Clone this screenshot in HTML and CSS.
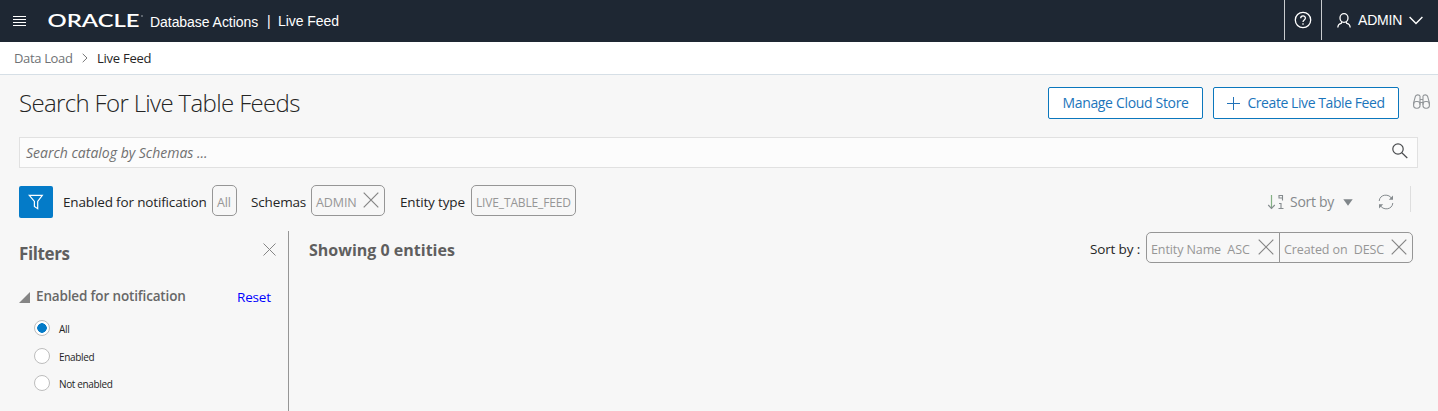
FILE: index.html
```html
<!DOCTYPE html>
<html lang="en">
<head>
<meta charset="utf-8">
<title>Database Actions | Live Feed</title>
<link rel="stylesheet" href="styles.css">
</head>
<body>
<header class="topbar">
  <svg class="menu" width="13" height="11" viewBox="0 0 13 11"><path d="M0 .5h13M0 3.500h13M0 6.500h13M0 9.500h13" stroke="#fff"/></svg>
  <svg class="logo" width="96" height="20" viewBox="0 0 96 20"><text x="-.5" y="16" textLength="92" lengthAdjust="spacingAndGlyphs">ORACLE</text><circle cx="94" cy="5" r=".8" fill="#aeb3b8"/></svg>
  <span class="product">Database Actions</span>
  <span class="bar">|</span>
  <span class="section">Live Feed</span>
  <div class="tools">
    <button class="help" aria-label="Help"><svg width="18" height="18" viewBox="0 0 18 18" fill="none" stroke="#fff" stroke-width="1.3"><circle cx="9" cy="9" r="7.700"/><path d="M6.700 7.200c0-3.100 4.700-3 4.700-.2 0 2-2.400 1.800-2.400 4M9 12.200v1.600"/></svg></button>
    <button class="user"><svg width="14" height="15" viewBox="0 0 14 15" fill="none" stroke="#fff" stroke-width="1.3"><ellipse cx="7" cy="5" rx="4" ry="4.300"/><path d="M5 8.800 4.200 10.400C2 10.800 1 11.800.8 14.500M9 8.800l.8 1.600c2.200.4 3.200 1.400 3.400 4.100"/></svg><span>ADMIN</span><svg width="14" height="9" viewBox="0 0 14 9" fill="none" stroke="#fff" stroke-width="1.4"><path d="M.6 1 7 7.400 13.400 1"/></svg></button>
  </div>
</header>
<nav class="crumbs">
  <a class="crumb-link">Data Load</a>
  <svg width="6" height="10" viewBox="0 0 6 10" fill="none" stroke="#777"><path d="M.7.8 5 5 .7 9.200"/></svg>
  <span class="crumb-now">Live Feed</span>
</nav>
<main>
  <div class="title-row">
    <h1>Search For Live Table Feeds</h1>
    <button class="btn manage"><span>Manage Cloud Store</span></button>
    <button class="btn create"><svg width="13" height="13" viewBox="0 0 13 13"><path d="M6.500 0v13M0 6.500h13" stroke="#2272b8"/></svg><span>Create Live Table Feed</span></button>
    <svg class="binoculars" width="17" height="15" viewBox="0 0 17 15" fill="none" stroke="#929699" stroke-width="1.1"><path d="M.7 10.500V8.500L2.300 2.700C2.600.3 6.400.3 7 2.200v8.500M16.300 10.500V8.500l-1.600-5.800C14.400.3 10.600.3 10 2.200v8.500M7 5.500h3M7 8.500h3"/><rect x=".6" y="7.500" width="6.400" height="6.700" rx="2.600"/><rect x="10" y="7.500" width="6.400" height="6.700" rx="2.600"/></svg>
  </div>
  <div class="search"><span>Search catalog by Schemas ...</span><svg width="16" height="16" viewBox="0 0 16 16" fill="none" stroke="#494b4e" stroke-width="1.2"><circle cx="6" cy="6" r="5.200"/><path d="m9.800 9.800 5.500 5.200"/></svg></div>
  <div class="filter-row">
    <button class="funnel" aria-label="Filters"><svg width="16" height="16" viewBox="0 0 16 16" fill="none" stroke="#fff" stroke-width="1.2"><path d="M1.300 1.300h13L9.700 7.400v7.300L6.400 12.500V7.400z"/></svg></button>
    <span class="label l-notify">Enabled for notification</span><span class="chip c-all"><span>All</span></span>
    <span class="label l-schemas">Schemas</span><span class="chip c-admin"><span>ADMIN</span><svg class="x" width="16" height="16" viewBox="0 0 16 16"><path d="m.7.7 14.600 14.600M15.300.7.7 15.300"/></svg></span>
    <span class="label l-type">Entity type</span><span class="chip c-type"><span>LIVE_TABLE_FEED</span></span>
    <div class="actions">
      <svg width="17" height="16" viewBox="0 0 17 16" fill="none" stroke="#858b8e"><path d="M4.500 1v13.500" stroke="#83b083" stroke-width="1.2"/><path d="M1.200 11 4.500 14.400 7.800 11M15.500 6.500V1.500h-3.500v2.500h3.500M12 9.500h2v5M11.500 14.500h5" stroke-width="1.1"/></svg>
      <span class="sort">Sort by</span>
      <svg class="caret" width="10" height="7" viewBox="0 0 10 7"><path d="M.3.3h9.400L5 6.800z" fill="#80868a"/></svg>
      <svg class="refresh" width="16" height="16" viewBox="0 0 16 16" fill="none" stroke="#858b8e"><path d="M1.200 7C1.600 0 11.400-.8 14 5M14.800 9C14.400 16 4.600 16.800 2 11"/><path d="M15 1.500v4.300h-4.200zM1 14.500v-4.300h4.200z" fill="#858b8e" stroke="none"/></svg>
    </div>
  </div>
  <div class="body-row">
    <aside>
      <div class="panel-head"><h2>Filters</h2><svg class="x" width="13" height="13" viewBox="0 0 13 13"><path d="m.5.5 12 12M12.500.5l-12 12"/></svg></div>
      <div class="group"><svg width="11" height="11" viewBox="0 0 11 11"><path d="M11 0v11H0z" fill="#858585"/></svg><h3>Enabled for notification</h3><a>Reset</a></div>
      <label class="radio"><input type="radio" name="n" checked><span>All</span></label>
      <label class="radio"><input type="radio" name="n"><span>Enabled</span></label>
      <label class="radio"><input type="radio" name="n"><span>Not enabled</span></label>
    </aside>
    <section class="results">
      <h2 class="count">Showing 0 entities</h2>
      <span class="label l-sort">Sort by :</span>
      <div class="sorts">
        <span class="chip s-name"><span>Entity Name&nbsp; ASC</span><svg class="x" width="16" height="16" viewBox="0 0 16 16"><path d="m.7.7 14.600 14.600M15.300.7.7 15.300"/></svg></span>
        <span class="chip s-date"><span>Created on&nbsp; DESC</span><svg class="x" width="16" height="16" viewBox="0 0 16 16"><path d="m.7.7 14.600 14.600M15.300.7.7 15.300"/></svg></span>
      </div>
    </section>
  </div>
</main>
</body>
</html>
```
FILE: styles.css
```css
* { box-sizing: border-box; }
body { margin: 0; height: 411px; overflow: hidden; background: #f7f7f7; color: #252525; font: 14px/20px "Open Sans", "Noto Sans", sans-serif; letter-spacing: -.4px; white-space: nowrap; }
h1, h2, h3 { margin: 0; }
svg { display: block; flex: none; }
button { font: inherit; letter-spacing: inherit; padding: 0; border: 0; background: none; color: inherit; display: flex; align-items: center; }
.topbar { height: 42px; background: #1e2733; color: #fff; display: flex; align-items: flex-start; padding-left: 13px; font: 14px/20px "Liberation Sans", Arial, sans-serif; letter-spacing: 0; }
.menu { margin-top: 16px; }
.logo { margin: 11px 6px 0 22px; }
.logo text { font: 600 17px "Lato", sans-serif; fill: #fff; }
.product { width: 117px; margin-top: 12px; letter-spacing: -.05px; }
.bar { width: 11px; margin-top: 11px; }
.section { margin-top: 11px; letter-spacing: -.05px; }
.tools { margin-left: auto; display: flex; height: 40px; width: 154px; }
.help { width: 38px; justify-content: center; border: solid #c8cbce; border-width: 0 1px; }
.user { padding-left: 15px; }
.user span { width: 45px; margin: 0 6px 0 7px; letter-spacing: -.2px; text-align: left; }
.crumbs { height: 33px; background: #fff; border-bottom: 1px solid #d6dfe6; display: flex; align-items: center; padding-left: 14px; font-size: 13px; letter-spacing: -.35px; }
.crumb-link { width: 68px; color: #6f7275; }
.crumbs svg { margin-right: 9px; }
.crumb-now { letter-spacing: -.25px; }
.title-row { height: 62px; display: flex; padding-left: 19px; }
h1 { font-size: 24px; line-height: 34px; font-weight: 300; letter-spacing: -.65px; margin-top: 11px; width: 1029px; }
.btn { height: 32px; margin-top: 12px; background: #fff; border: 1px solid #0b77bd; border-radius: 2px; color: #1b75bb; justify-content: center; }
.manage { width: 155px; margin-right: 10px; letter-spacing: -.33px; }
.create { width: 186px; gap: 7px; letter-spacing: -.43px; }
.binoculars { margin: 19px 0 0 14px; }
.search { height: 31px; margin: 0 20px 0 19px; background: #fcfcfc; border: 1px solid #e1e1e1; display: flex; align-items: center; justify-content: space-between; padding: 0 9px 0 6px; color: #707070; font-size: 14px; letter-spacing: 0; font-style: italic; }
.search svg { margin-top: -3px; }
.filter-row { height: 63px; display: flex; align-items: flex-start; padding: 17px 27px 0 19px; }
.funnel { width: 34px; height: 32px; margin-top: 1px; margin-right: 10px; justify-content: center; background: #047bc8; border-radius: 2px; }
.label { font-size: 13.500px; margin-top: 7px; letter-spacing: -.15px; }
.l-notify { width: 149px; }
.l-schemas { width: 60px; margin-left: 14px; }
.l-type { width: 71px; margin-left: 15px; }
.chip { height: 31px; border: 1px solid #969696; border-radius: 5px; display: flex; padding: 0 4px; color: #969696; font-size: 12.500px; letter-spacing: -.1px; line-height: 33px; }
.x { fill: none; stroke: #858585; stroke-width: 1.200; }
.chip .x { margin: 6px 1px 0 auto; }
.c-all { width: 25px; }
.c-admin { width: 74px; }
.c-type { width: 105px; font-size: 12px; letter-spacing: -.15px; }
.actions { margin-left: auto; width: 144px; height: 26px; margin-top: 1px; border-right: 1px solid #dedede; display: flex; align-items: flex-start; color: #85898c; }
.actions > svg { margin-top: 8px; }
.sort { margin: 6px 8px 0 6px; width: 45px; letter-spacing: -.3px; }
.actions .caret { margin-top: 13px; }
.actions .refresh { margin-left: 25px; }
.body-row { display: flex; height: 180px; }
aside { width: 289px; border-right: 1px solid #969696; padding-left: 19px; }
.panel-head { display: flex; height: 55px; justify-content: space-between; padding-right: 12px; }
h2 { font-size: 17px; line-height: 24px; font-weight: 700; color: #5f5f5f; }
.panel-head h2 { margin-top: 11px; }
.panel-head .x { margin-top: 12px; stroke-width: 1; }
.group { display: flex; height: 28px; }
.group svg { margin: 6px 6px 0 0; }
h3 { width: 201px; font-size: 13.500px; line-height: 20px; font-weight: 600; color: #676767; letter-spacing: -.15px; }
.group a { color: #00f; font-size: 13.500px; letter-spacing: -.2px; margin-top: 1px; }
.radio { display: flex; align-items: center; height: 27.700px; padding-left: 15px; font-size: 10px; letter-spacing: -.35px; }
.radio input { appearance: none; width: 16px; height: 16px; margin: 0 9px 0 0; border: 1px solid #bdbdbd; border-radius: 50%; background: #fff; }
.radio input:checked { background: radial-gradient(circle, #047bc8 4.500px, #fff 5px); }
.radio span { margin-top: 2px; }
.results { flex: 1; display: flex; padding-left: 20px; }
.count { font-size: 16px; letter-spacing: 0; margin-top: 7px; width: 781px; }
.l-sort { width: 56px; margin-top: 8px; }
.sorts { display: flex; margin-top: 1px; }
.s-name { width: 134px; border-radius: 5px 0 0 5px; }
.s-date { width: 134px; margin-left: -1px; border-radius: 0 5px 5px 0; }
.sorts .chip .x { margin-right: 1px; }
```
